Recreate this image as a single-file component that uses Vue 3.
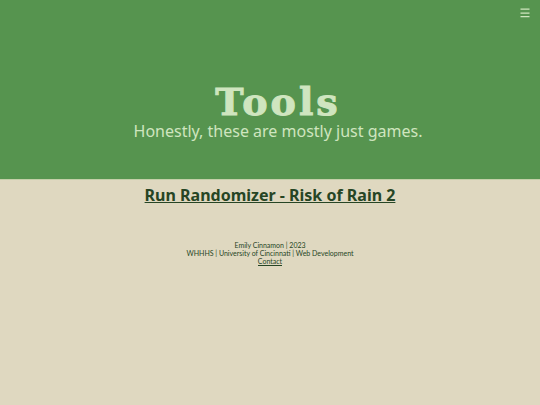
<script setup>
import { ref } from 'vue'

const menuOpen = ref(false)
</script>

<template>
  <div class="page">
    <header>
      <nav>
        <button
          class="menu-button"
          aria-label="Menu"
          :aria-expanded="menuOpen"
          @click="menuOpen = !menuOpen"
        >
          <svg width="10" height="10" viewBox="0 0 10 10" aria-hidden="true">
            <path d="M0.5 1.2h9M0.5 5.2h9M0.5 8.6h9" stroke="currentColor" stroke-width="1.3" />
          </svg>
        </button>
      </nav>
      <div class="banner">
        <h1>Tools</h1>
        <p>Honestly, these are mostly just games.</p>
      </div>
    </header>

    <main>
      <h2><a href="#">Run Randomizer - Risk of Rain 2</a></h2>
    </main>

    <footer>
      <p>Emily Cinnamon | 2023</p>
      <p>WHHHS | University of Cincinnati | Web Development</p>
      <p><a href="#">Contact</a></p>
    </footer>
  </div>
</template>

<style>
body {
  margin: 0;
  background: #dfd8c0;
}
</style>

<style scoped>
.page {
  font-family: "Trebuchet MS", "Noto Sans", sans-serif;
  color: #264524;
  text-align: center;
}

header {
  background: #56944f;
  color: #cfe5bf;
  border-bottom: 1px solid #c3cfa8;
  padding-bottom: 38px;
}

nav {
  display: flex;
  justify-content: flex-end;
  padding: 8px 10px 0 0;
}

.menu-button {
  display: flex;
  padding: 0;
  border: 0;
  background: none;
  color: inherit;
  cursor: pointer;
}

.banner {
  padding: 64px 0 0 16px;
}

h1 {
  margin: 0;
  font-family: "DejaVu Serif", serif;
  font-size: 38px;
  line-height: 40px;
  font-weight: bold;
  letter-spacing: 3px;
  -webkit-text-stroke: 1px currentColor;
}

.banner p {
  margin: 0;
  font-size: 16px;
  line-height: 19px;
}

main {
  padding-top: 5px;
}

h2 {
  margin: 0;
  font-size: 16px;
  line-height: 20px;
}

a {
  color: inherit;
}

footer {
  padding-top: 36px;
  font-family: "Trebuchet MS", Lato, sans-serif;
  font-size: 7px;
  line-height: 8px;
}

footer p {
  margin: 0;
}

footer a {
  display: inline-block;
  border-bottom: 1px solid currentColor;
  line-height: 7px;
  text-decoration: none;
}
</style>
